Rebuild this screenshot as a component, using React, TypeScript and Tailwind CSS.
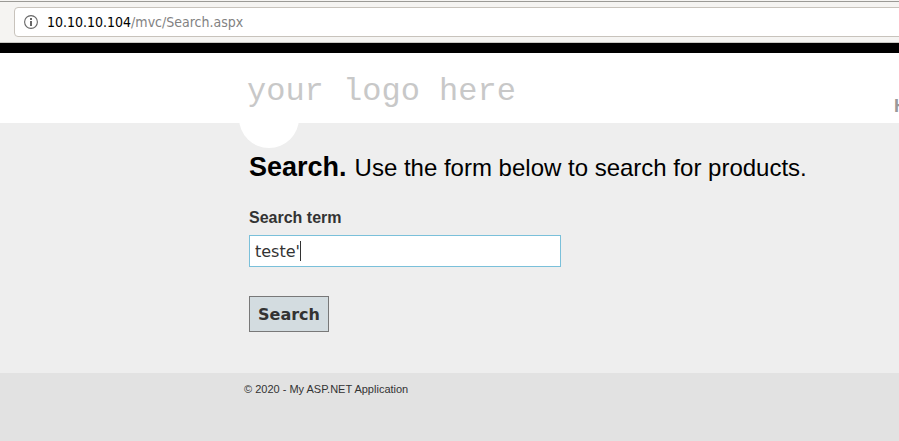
import { useState } from "react";

function AddressBar() {
  return (
    <div className="flex h-[43px] items-start border-b border-[#c9c8c4] bg-[#f5f4f2] pt-px">
      <div className="flex h-[41px] w-full items-center border-t border-[#9b9a96] pl-3.5">
        <div className="-mr-1 flex h-[30px] grow items-center gap-2 rounded-sm border border-[#c8c3bc] bg-white pl-2">
          <svg className="size-4 shrink-0" viewBox="0 0 16 16" aria-hidden="true">
            <circle cx="8" cy="8" r="6.4" fill="none" stroke="#666" strokeWidth="1.1" />
            <rect x="7" y="7" width="2" height="5" fill="#666" />
            <rect x="7" y="4" width="2" height="2" fill="#666" />
          </svg>
          <span className="font-['DejaVu_Sans_Condensed','DejaVu_Sans',sans-serif] text-[14px] leading-5 text-[#828282]">
            <span className="text-black">10.10.10.104</span>/mvc/Search.aspx
          </span>
        </div>
      </div>
    </div>
  );
}

function Header() {
  return (
    <header className="relative h-20 border-t-[10px] border-black bg-white">
      <div className="absolute top-[35px] left-[239px] size-[60px] rounded-full bg-white" />
      <div className="relative flex items-start overflow-hidden pt-[19px] pl-[247px]">
        <a
          href="#"
          className="w-[647px] shrink-0 font-['Liberation_Mono',monospace] text-[32px] leading-10 whitespace-nowrap text-[#c8c8c8]"
        >
          your logo here
        </a>
        <nav className="shrink-0 pt-6">
          <a href="#" className="block text-[18px] leading-5 font-bold text-[#999]">
            Home
          </a>
        </nav>
      </div>
    </header>
  );
}

function SearchForm() {
  const [term, setTerm] = useState("teste'");
  return (
    <form className="flex flex-col items-start" onSubmit={(e) => e.preventDefault()}>
      <label htmlFor="term" className="text-[16px] leading-6 font-bold text-[#333]">
        Search term
      </label>
      <div className="relative mt-[5px]">
        <input
          id="term"
          type="text"
          value={term}
          onChange={(e) => setTerm(e.target.value)}
          className="block h-8 w-[312px] border border-[#7ac0da] bg-white px-[5px] font-['DejaVu_Sans',sans-serif] text-[16px] text-[#333] outline-none"
        />
        <span className="absolute top-1.5 left-[51px] h-5 w-px bg-[#333]" />
      </div>
      <button
        type="submit"
        className="mt-[29px] h-9 w-20 border border-[#787878] bg-[#d3dce0] pt-0.5 font-['DejaVu_Sans',sans-serif] text-[16px] font-bold text-[#333]"
      >
        Search
      </button>
    </form>
  );
}

export default function App() {
  return (
    <div className="flex min-h-screen flex-col overflow-hidden bg-[#e2e2e2] font-['Liberation_Sans',Arial,sans-serif]">
      <AddressBar />
      <Header />
      <main className="bg-[#eee] pt-[26px] pb-[41px] pl-[249px]">
        <div className="mb-5 flex items-baseline gap-2 leading-9 whitespace-nowrap text-black">
          <h1 className="text-[27px] font-bold">Search.</h1>
          <h2 className="text-[24px]">Use the form below to search for products.</h2>
        </div>
        <SearchForm />
      </main>
      <footer className="pt-2 pl-[244px] text-[11px] leading-4 text-[#333]">
        © 2020 - My ASP.NET Application
      </footer>
    </div>
  );
}
